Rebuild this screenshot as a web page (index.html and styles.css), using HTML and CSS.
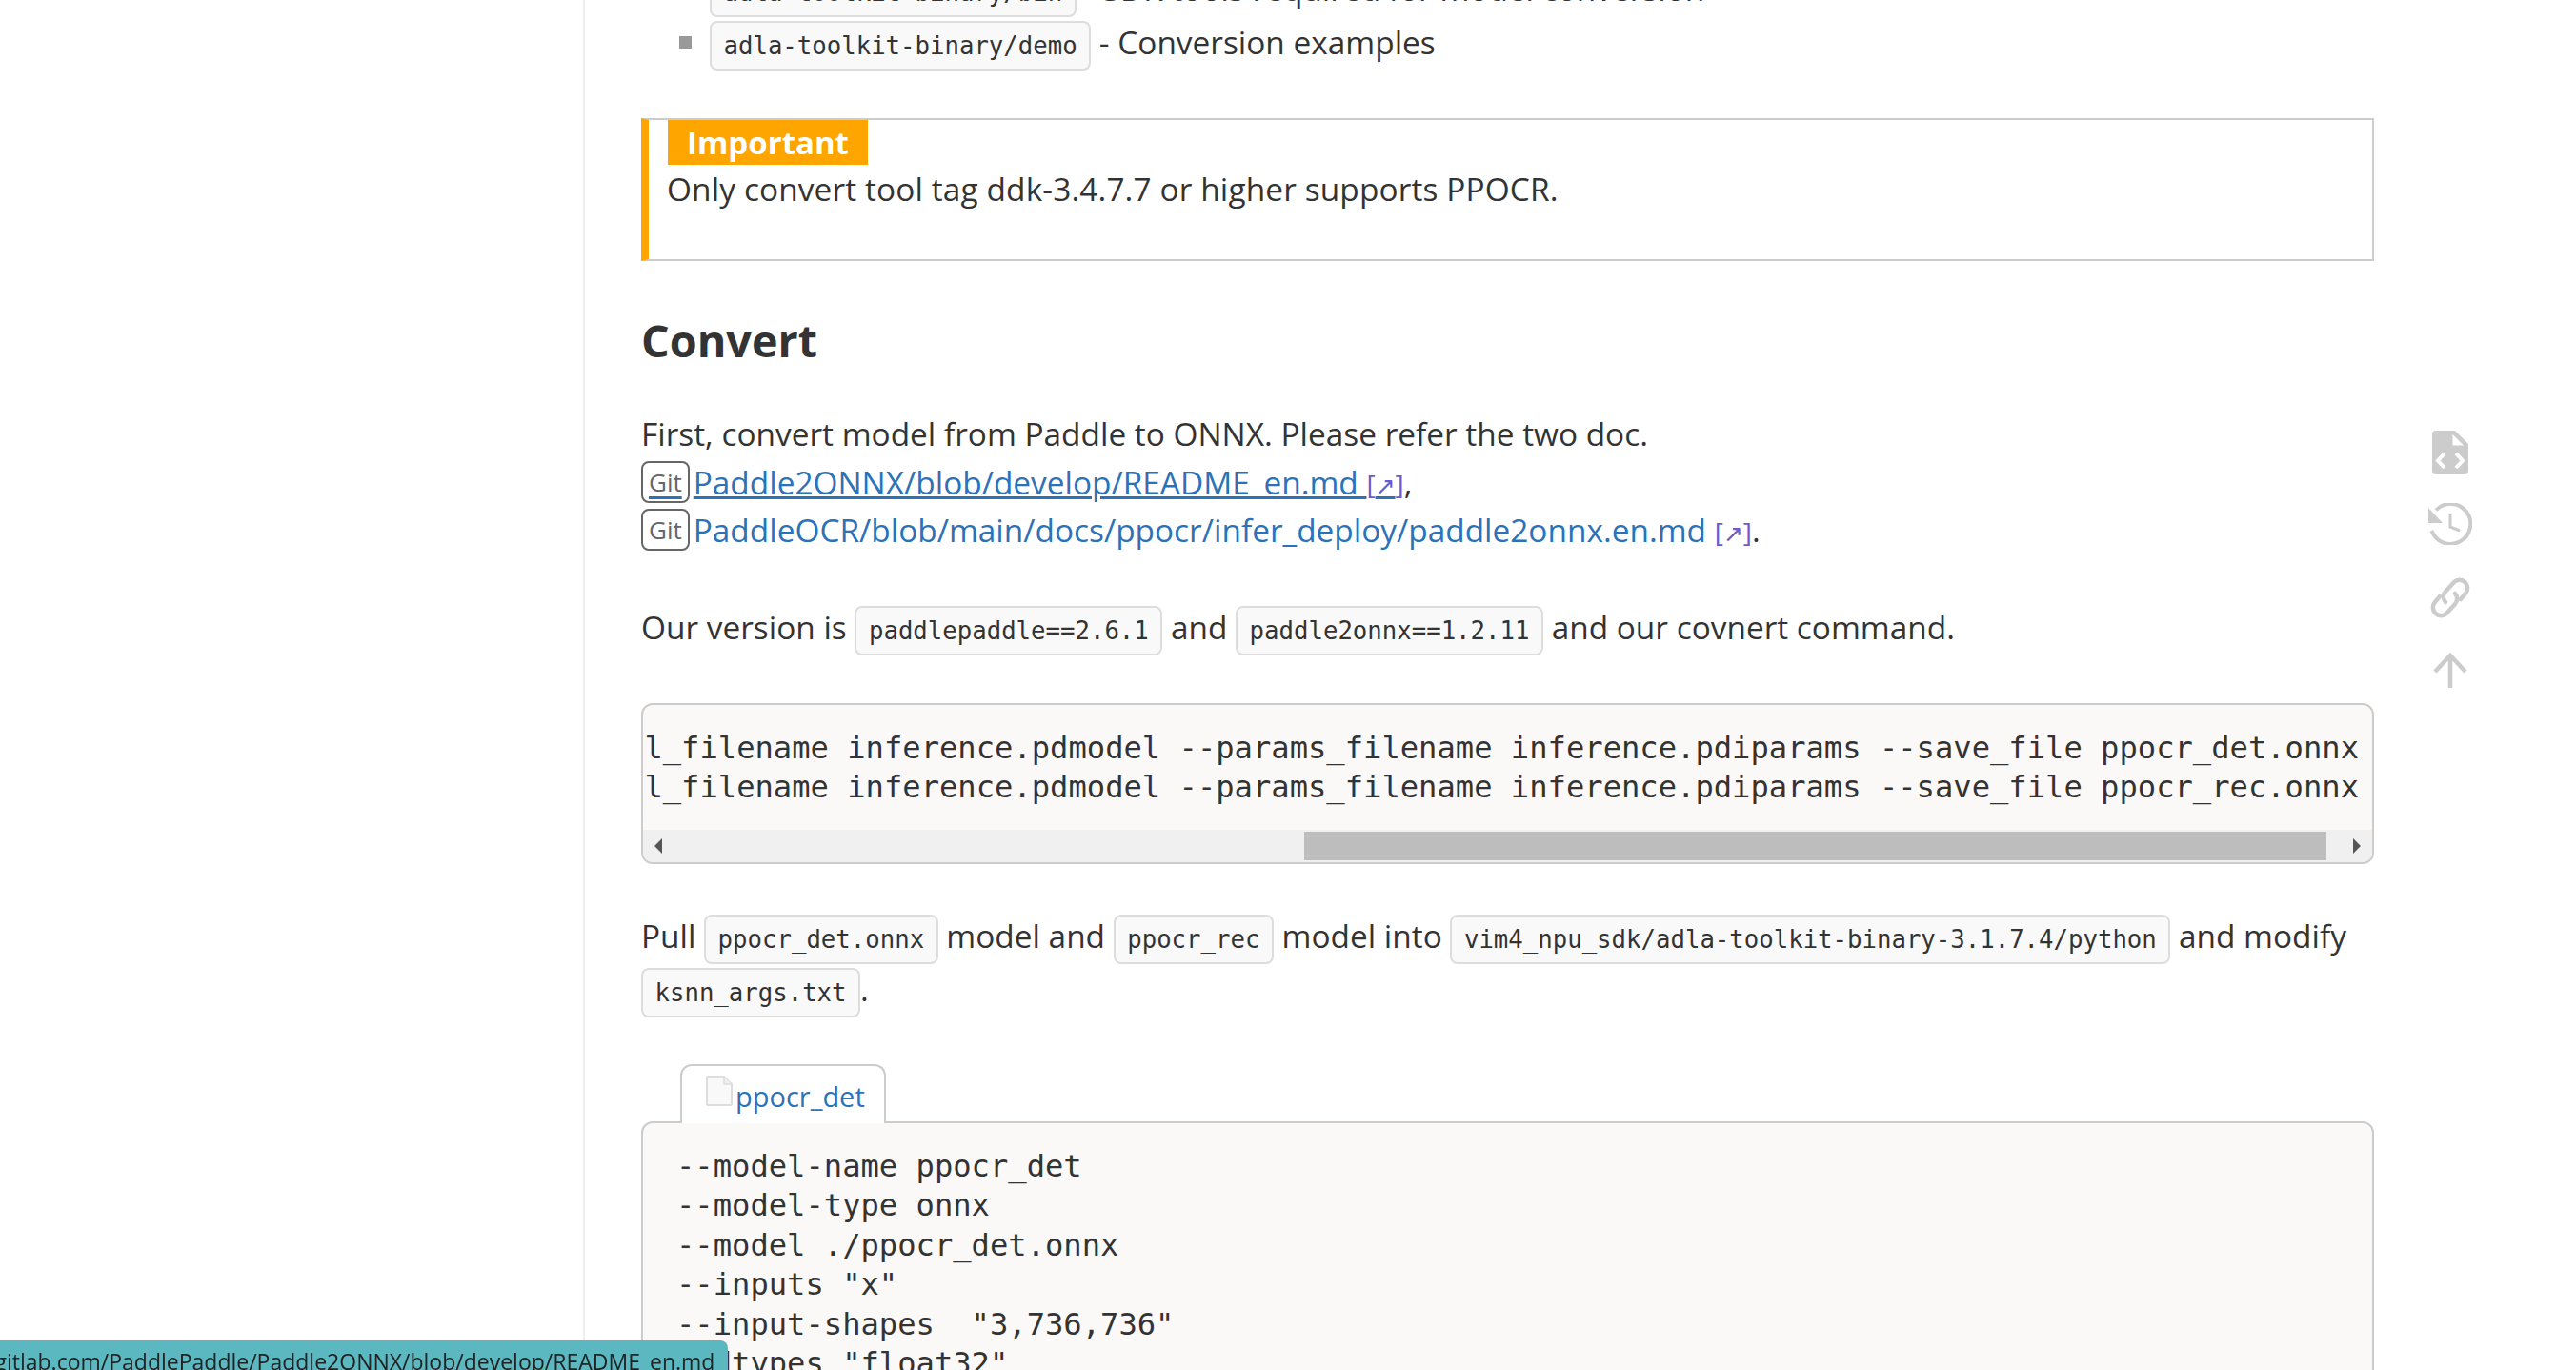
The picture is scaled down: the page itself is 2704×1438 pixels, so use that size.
FILE: index.html
```
<!DOCTYPE html>
<html lang="en">
<head>
<meta charset="utf-8">
<title>Convert</title>
<link rel="stylesheet" href="styles.css">
</head>
<body>
<div class="page">
  <aside class="sidebar"></aside>
  <main class="article">
    <ul class="files">
      <li><code>adla-toolkit-binary/bin</code> - SDK tools required for model conversion</li>
      <li><code>adla-toolkit-binary/demo</code> - Conversion examples</li>
    </ul>
    <div class="callout">
      <div class="callout-title">Important</div>
      <p class="callout-text">Only convert tool tag ddk-3.4.7.7 or higher supports PPOCR.</p>
    </div>
    <h2 class="heading">Convert</h2>
    <p class="links">First, convert model from Paddle to ONNX. Please refer the two doc.<br>
      <a class="link hover" href="#"><span class="git">Git</span>Paddle2ONNX/blob/develop/README_en.md <span class="ext">[<span class="arrow">↗</span>]</span></a>,<br>
      <a class="link" href="#"><span class="git">Git</span>PaddleOCR/blob/main/docs/ppocr/infer_deploy/paddle2onnx.en.md <span class="ext">[<span class="arrow">↗</span>]</span></a>.</p>
    <p class="version">Our version is <code>paddlepaddle==2.6.1</code> and <code>paddle2onnx==1.2.11</code> and our covnert command.</p>
    <div class="scrollcode">
      <div class="scrollcode-view">
        <pre class="mono">paddle2onnx --model_dir ./inference/det --model_filename inference.pdmodel --params_filename inference.pdiparams --save_file ppocr_det.onnx
paddle2onnx --model_dir ./inference/rec --model_filename inference.pdmodel --params_filename inference.pdiparams --save_file ppocr_rec.onnx</pre>
      </div>
      <div class="scrollbar">
        <span class="arrow-left"></span>
        <div class="track"><div class="thumb"></div></div>
        <span class="arrow-right"></span>
      </div>
    </div>
    <p class="pull">Pull <code>ppocr_det.onnx</code> model and <code>ppocr_rec</code> model into <code>vim4_npu_sdk/adla-toolkit-binary-3.1.7.4/python</code> and modify <code>ksnn_args.txt</code>.</p>
    <div class="tabs">
      <div class="tab">
        <svg class="file-icon" viewBox="0 0 28 32" aria-hidden="true"><path d="M1 2.5Q1 1 2.5 1H19L27 9V29.5Q27 31 25.5 31H2.5Q1 31 1 29.5Z" fill="#f9f9f9" stroke="#ddd" stroke-width="2"/><path d="M19 1V9H27" fill="#eee" stroke="#ddd" stroke-width="1.5"/></svg><span class="tab-label">ppocr_det</span>
      </div>
    </div>
    <pre class="block mono">--model-name ppocr_det
--model-type onnx
--model ./ppocr_det.onnx
--inputs "x"
--input-shapes  "3,736,736"
--dtypes "float32"</pre>
  </main>
</div>
<nav class="rail">
  <svg class="rail-file" viewBox="0 0 38 46"><path d="M4 0H24L38 14V42A4 4 0 0 1 34 46H4A4 4 0 0 1 0 42V4A4 4 0 0 1 4 0Z"/><path d="M21.500 4L33 15.500H21.500Z" fill="#fff"/><path d="M13 24L6 31.500 13 39M25 24L32 31.500 25 39" fill="none" stroke="#fff" stroke-width="4"/></svg>
  <svg class="rail-history" viewBox="0 0 46 44"><path d="M8 7.500A21 21 0 1 1 3.500 29" fill="none" stroke="#ccc" stroke-width="4"/><path d="M0 5V21H15Z" fill="#ccc"/><path d="M23 12V25L33 29" fill="none" stroke="#ccc" stroke-width="3"/></svg>
  <svg class="rail-link" viewBox="0 0 44 45"><g fill="none" stroke="#ccc" stroke-width="4.500" stroke-linecap="round"><path d="M17 27A8 8 0 0 1 17 16L26 6A8.500 8.500 0 0 1 38 18L33 24"/><path d="M27 18A8 8 0 0 1 27 29L18 39A8.500 8.500 0 0 1 6 27L11 21"/></g></svg>
  <svg class="rail-top" viewBox="0 0 36 37"><path d="M18 37V3M2 20L18 3 34 20" fill="none" stroke="#ccc" stroke-width="4.500"/></svg>
</nav>
<div class="status"><span class="status-text">https://gitlab.com/PaddlePaddle/Paddle2ONNX/blob/develop/README_en.md</span></div>
</body>
</html>
```
FILE: styles.css
```
* { box-sizing: border-box; }
html, body { margin: 0; height: 100%; overflow: hidden; background: #fff; }
body { font-family: "Open Sans", "Noto Sans", sans-serif; font-size: 33.4px; color: #333; }
.page { display: flex; height: 1438px; overflow: hidden; }
.sidebar { width: 614px; flex: none; border-right: 2px solid #eee; }
.article { width: 1878px; flex: none; padding-left: 59px; margin-top: -40px; }
code { font-family: "DejaVu Sans Mono", monospace; font-size: 25.7px; line-height: 1; background: #f9f9f9; border: 2px solid #ddd; border-radius: 8px; padding: 9px 12.5px; }
p { margin: 0; }
.files { list-style: none; margin: 0 0 52px; padding: 0 0 0 72px; }
.files li { position: relative; line-height: 56px; height: 56px; }
.files li::before { content: ""; position: absolute; left: -32px; top: 22px; width: 13px; height: 13px; background: #999; }
.callout { height: 150px; border: 2px solid #ccc; border-left: 8px solid #ffa500; padding-left: 19px; }
.callout-title { display: inline-block; height: 47px; line-height: 47px; padding: 0 20px 0 20px; background: #ffa500; color: #fff; font-weight: 700; font-size: 33px; margin-left: 1px; }
.callout-text { line-height: 51px; letter-spacing: .12px; }
.heading { margin: 50px 0 0; font-size: 46.7px; font-weight: 700; line-height: 66px; }
.links { margin-top: 40px; line-height: 50.5px; }
.link { color: #2b72b8; text-decoration: none; }
.hover { text-decoration: underline; }
.git { font-size: 26px; line-height: 1; color: #666; border: 2px solid #666; border-radius: 8px; padding: 2px 6px; margin-right: 4px; vertical-align: 3px; }
.ext { font-size: 28px; line-height: 1; color: #6a5acd; }
.arrow { font-family: "DejaVu Sans", sans-serif; font-size: 25px; line-height: 1; }
.version { margin-top: 48px; line-height: 56px; }
.mono { font-family: "DejaVu Sans Mono", monospace; font-size: 32.15px; line-height: 41.6px; margin: 0; }
.scrollcode { margin-top: 52px; height: 169px; display: flex; flex-direction: column; border: 2px solid #ccc; border-radius: 12px; background: #faf9f8; overflow: hidden; }
.scrollcode-view { flex: 1; display: flex; justify-content: flex-end; align-items: flex-start; padding: 25px 14px 0 0; overflow: hidden; }
.scrollcode-view pre { flex: none; }
.scrollbar { height: 34px; flex: none; display: flex; align-items: center; background: #f0f0f0; }
.arrow-left, .arrow-right { flex: none; width: 0; height: 0; border-style: solid; border-color: transparent; }
.arrow-left { border-width: 8px 8px 8px 0; border-right-color: #555; margin: 0 12px 0 12px; }
.arrow-right { border-width: 8px 0 8px 8px; border-left-color: #555; margin: 0 12px 0 12px; }
.track { flex: 1; height: 30px; }
.thumb { width: 1073px; height: 30px; margin-left: 662px; background: #bdbdbd; }
.pull { margin-top: 47px; line-height: 56px; }
.tabs { display: flex; margin-top: 51px; padding-left: 41px; position: relative; z-index: 1; }
.tab { width: 216px; height: 62px; margin-bottom: -2px; display: flex; align-items: flex-end; gap: 3px; padding: 0 0 6px 25px; background: #fff; border: 2px solid #ccc; border-bottom: 0; border-radius: 12px 12px 0 0; }
.file-icon { width: 28px; height: 32px; flex: none; margin-bottom: 12px; }
.tab-label { color: #2b72b8; line-height: 44px; font-size: 29px; }
.block { border: 2px solid #ccc; border-radius: 12px; background: #faf9f8; padding: 25px 35px; height: 400px; }
.rail { position: fixed; left: 2549px; top: 452px; width: 46px; display: flex; flex-direction: column; align-items: center; }
.rail svg { display: block; fill: #ccc; }
.rail-file { width: 38px; height: 46px; }
.rail-history { width: 46px; height: 44px; margin-top: 30px; }
.rail-link { width: 44px; height: 45px; margin-top: 33px; }
.rail-top { width: 36px; height: 37px; margin-top: 35px; }
.status { position: fixed; left: 0; bottom: 0; width: 764px; height: 31px; overflow: hidden; background: #5bb8c1; border-radius: 0 8px 0 0; white-space: nowrap; }
.status-text { display: block; font-size: 23px; line-height: 36px; color: #222; margin-left: -84px; margin-top: 4px; }
```
